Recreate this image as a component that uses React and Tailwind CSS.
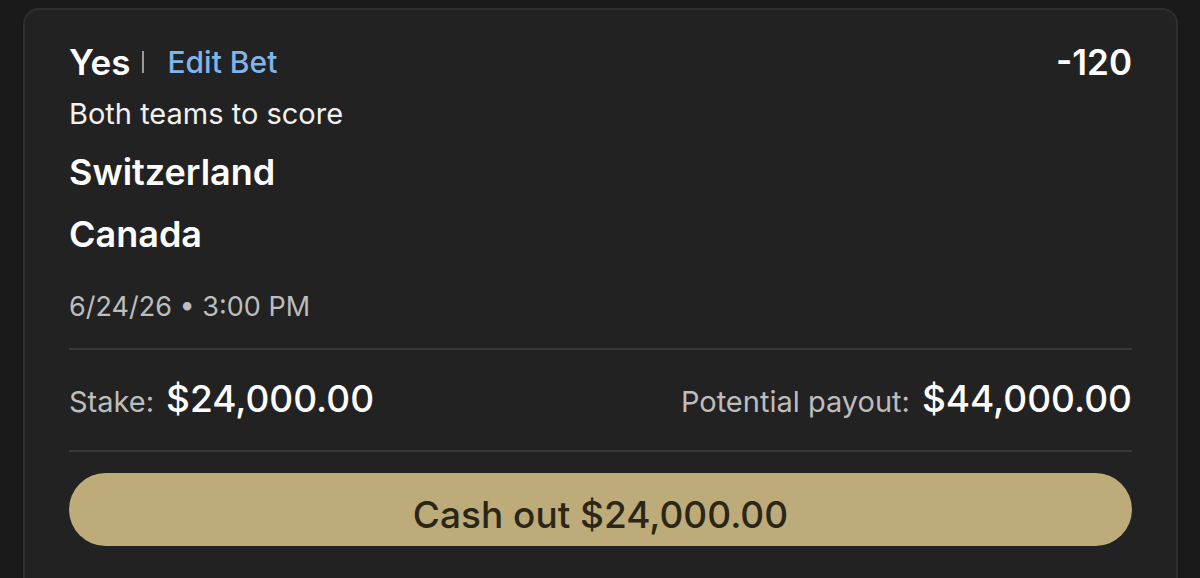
import React from 'react';

const font = { fontFamily: 'Inter, "Noto Sans", sans-serif' };

const Divider = () => <div className="h-[2px] w-full bg-[#383838]" />;

export default function App() {
  return (
    <div className="h-[578px] w-[1200px] overflow-hidden bg-[#1a1a1a] pl-[23px] pr-[22px] pt-[8px]" style={font}>
      <div className="h-[620px] rounded-t-[16px] border-2 border-b-0 border-[#2f2f2f] bg-[#222222] px-[44px] pt-[30px]">
        {/* selection */}
        <div className="flex items-center justify-between">
          <div className="flex items-center">
            <span className="text-[35px] font-semibold leading-[44px] text-white">Yes</span>
            <span className="ml-[12px] mr-[23px] h-[22px] w-[2px] bg-[#9a9a9a]" />
            <span className="text-[30px] font-medium leading-[44px] text-[#80b4ec]">Edit Bet</span>
          </div>
          <span className="text-[35px] font-semibold leading-[44px] text-white">-120</span>
        </div>
        <div className="mt-[12px] text-[29px] leading-[36px] text-[#f2f2f2]">Both teams to score</div>

        {/* teams */}
        <div className="mt-[18px] text-[36px] font-semibold leading-[44px] text-white">Switzerland</div>
        <div className="mt-[18px] text-[36px] font-semibold leading-[44px] text-white">Canada</div>

        <div className="mt-[33px] text-[27px] leading-[36px] text-[#bdbdbd]">6/24/26 • 3:00 PM</div>

        <div className="mt-[23px]">
          <Divider />
        </div>

        {/* stake / payout */}
        <div className="flex items-baseline justify-between pb-[26px] pt-[27px] leading-[44px]">
          <div className="flex items-baseline gap-[12px]">
            <span className="text-[29px] text-[#bdbdbd]">Stake:</span>
            <span className="text-[37px] font-medium text-white">$24,000.00</span>
          </div>
          <div className="flex items-baseline gap-[12px]">
            <span className="text-[29px] text-[#bdbdbd]">Potential payout:</span>
            <span className="text-[37px] font-medium text-white">$44,000.00</span>
          </div>
        </div>

        <Divider />

        <button className="mt-[21px] flex h-[73px] w-full items-center justify-center rounded-full bg-[#bdab79] pt-[10px] text-[37px] font-medium text-[#2a2618]">
          Cash out $24,000.00
        </button>
      </div>
    </div>
  );
}
